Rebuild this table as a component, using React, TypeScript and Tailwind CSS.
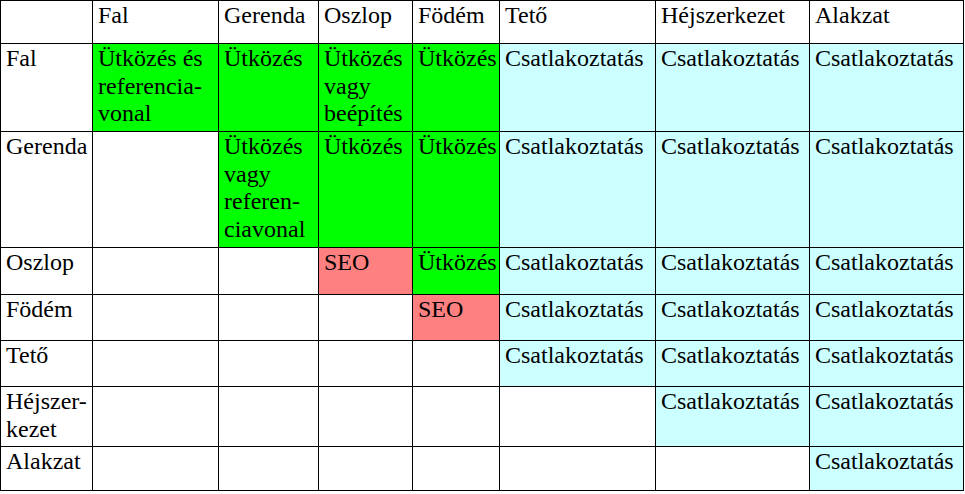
const G = "bg-[#00ff00]";
const C = "bg-[#ccffff]";
const R = "bg-[#ff8080]";
const W = "bg-white";

type Cell = { t?: React.ReactNode; bg?: string };

const heads = ["", "Fal", "Gerenda", "Oszlop", "Födém", "Tető", "Héjszerkezet", "Alakzat"];

const conn: Cell = { t: "Csatlakoztatás", bg: C };
const ut: Cell = { t: "Ütközés", bg: G };
const empty: Cell = {};

const rows: { h: string; label: React.ReactNode; cells: Cell[] }[] = [
  {
    h: "h-[88px]",
    label: "Fal",
    cells: [
      { t: <>Ütközés és<br />referencia-<br />vonal</>, bg: G },
      ut,
      { t: <>Ütközés<br />vagy<br />beépítés</>, bg: G },
      ut,
      conn,
      conn,
      conn,
    ],
  },
  {
    h: "h-[116px]",
    label: "Gerenda",
    cells: [
      empty,
      { t: <>Ütközés<br />vagy<br />referen-<br />ciavonal</>, bg: G },
      ut,
      ut,
      conn,
      conn,
      conn,
    ],
  },
  {
    h: "h-[47px]",
    label: "Oszlop",
    cells: [empty, empty, { t: "SEO", bg: R }, ut, conn, conn, conn],
  },
  {
    h: "h-[46px]",
    label: "Födém",
    cells: [empty, empty, empty, { t: "SEO", bg: R }, conn, conn, conn],
  },
  {
    h: "h-[46px]",
    label: "Tető",
    cells: [empty, empty, empty, empty, conn, conn, conn],
  },
  {
    h: "h-[60px]",
    label: <>Héjszer-<br />kezet</>,
    cells: [empty, empty, empty, empty, empty, conn, conn],
  },
  {
    h: "h-[44px]",
    label: "Alakzat",
    cells: [empty, empty, empty, empty, empty, empty, conn],
  },
];

const cellCls =
  "border-r border-b border-black pl-[5px] pt-px font-['Liberation_Serif'] text-[24px] leading-[27.6px] text-black whitespace-nowrap overflow-hidden";

export default function App() {
  return (
    <div className="w-[965px] h-[494px] bg-white font-['Liberation_Serif']">
      <div className="inline-grid grid-cols-[92px_126px_100px_94px_87px_156px_154px_154px] border-l border-t border-black">
        {heads.map((h, i) => (
          <div key={i} className={`${cellCls} h-[43px] ${W}`}>
            {h}
          </div>
        ))}
        {rows.map((r, ri) => (
          <div key={ri} className="contents">
            <div className={`${cellCls} ${r.h} ${W}`}>{r.label}</div>
            {r.cells.map((c, ci) => (
              <div key={ci} className={`${cellCls} ${r.h} ${c.bg ?? W}`}>
                {c.t}
              </div>
            ))}
          </div>
        ))}
      </div>
    </div>
  );
}
